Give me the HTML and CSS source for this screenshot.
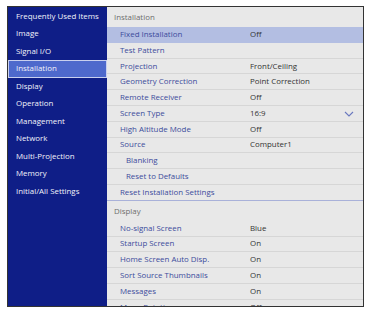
FILE: index.html
```html
<!DOCTYPE html>
<html>
<head>
<meta charset="utf-8">
<link rel="stylesheet" href="styles.css">
</head>
<body>
<div class="frame">
  <nav class="side">
    <div class="nav-item">Frequently Used Items</div>
    <div class="nav-item">Image</div>
    <div class="nav-item">Signal I/O</div>
    <div class="nav-item active">Installation</div>
    <div class="nav-item">Display</div>
    <div class="nav-item">Operation</div>
    <div class="nav-item">Management</div>
    <div class="nav-item">Network</div>
    <div class="nav-item">Multi-Projection</div>
    <div class="nav-item">Memory</div>
    <div class="nav-item">Initial/All Settings</div>
  </nav>
  <main class="panel">
    <section class="group">
      <div class="group-head">Installation</div>
      <div class="row selected"><span class="label">Fixed Installation</span><span class="value">Off</span></div>
      <div class="row"><span class="label">Test Pattern</span><span class="value"></span></div>
      <div class="row"><span class="label">Projection</span><span class="value">Front/Ceiling</span></div>
      <div class="row"><span class="label">Geometry Correction</span><span class="value">Point Correction</span></div>
      <div class="row"><span class="label">Remote Receiver</span><span class="value">Off</span></div>
      <div class="row"><span class="label">Screen Type</span><span class="value">16:9</span>
        <svg class="chev" width="10" height="6" viewBox="0 0 10 6"><path d="M1 1 L5 5 L9 1" fill="none" stroke="#6a78bf" stroke-width="1.1"/></svg>
      </div>
      <div class="row"><span class="label">High Altitude Mode</span><span class="value">Off</span></div>
      <div class="row"><span class="label">Source</span><span class="value">Computer1</span></div>
      <div class="row sub"><span class="label">Blanking</span><span class="value"></span></div>
      <div class="row sub"><span class="label">Reset to Defaults</span><span class="value"></span></div>
      <div class="row last"><span class="label">Reset Installation Settings</span><span class="value"></span></div>
    </section>
    <section class="group">
      <div class="group-head">Display</div>
      <div class="row"><span class="label">No-signal Screen</span><span class="value">Blue</span></div>
      <div class="row"><span class="label">Startup Screen</span><span class="value">On</span></div>
      <div class="row"><span class="label">Home Screen Auto Disp.</span><span class="value">On</span></div>
      <div class="row"><span class="label">Sort Source Thumbnails</span><span class="value">On</span></div>
      <div class="row"><span class="label">Messages</span><span class="value">On</span></div>
      <div class="row"><span class="label">Menu Rotation</span><span class="value">Off</span></div>
    </section>
  </main>
</div>
</body>
</html>
```
FILE: styles.css
```css
html, body {
  margin: 0;
  padding: 0;
  background: #ffffff;
}
body {
  font-family: "Open Sans", "Noto Sans", sans-serif;
  font-size: 7.9px;
}
.frame {
  margin: 6px 0 0 7px;
  width: 355px;
  height: 299px;
  border: 1px solid #333;
  display: flex;
  overflow: hidden;
}
.side {
  width: 99px;
  flex: none;
  background: #0f1e87;
  padding-top: 0.5px;
  box-sizing: border-box;
}
.nav-item {
  height: 17.5px;
  line-height: 17.5px;
  color: #f2f3fa;
  padding-left: 8px;
  box-sizing: border-box;
  white-space: nowrap;
}
.nav-item.active {
  background: #4e69cc;
  border: 1px solid #c9d0ee;
  line-height: 15.5px;
  padding-left: 7px;
}
.panel {
  flex: 1;
  background: #e8e8e8;
  overflow: hidden;
}
.group-head {
  height: 20px;
  line-height: 20px;
  padding-left: 7px;
  color: #6e6e6e;
}
.row {
  height: 15.8px;
  line-height: 15px;
  display: flex;
  align-items: center;
  border-bottom: 0.8px solid #d6d6d6;
  box-sizing: border-box;
  position: relative;
}
.row.selected {
  background: #b3bee2;
  border-bottom-color: #b3bee2;
}
.row.last {
  border-bottom: 1px solid #a9b1d9;
}
.label {
  width: 130px;
  padding-left: 13px;
  color: #3c4c9c;
  white-space: nowrap;
  flex: none;
}
.row.sub .label {
  padding-left: 19px;
  width: 124px;
}
.value {
  color: #333;
  white-space: nowrap;
}
.chev {
  position: absolute;
  right: 9px;
  top: 5px;
}
```
